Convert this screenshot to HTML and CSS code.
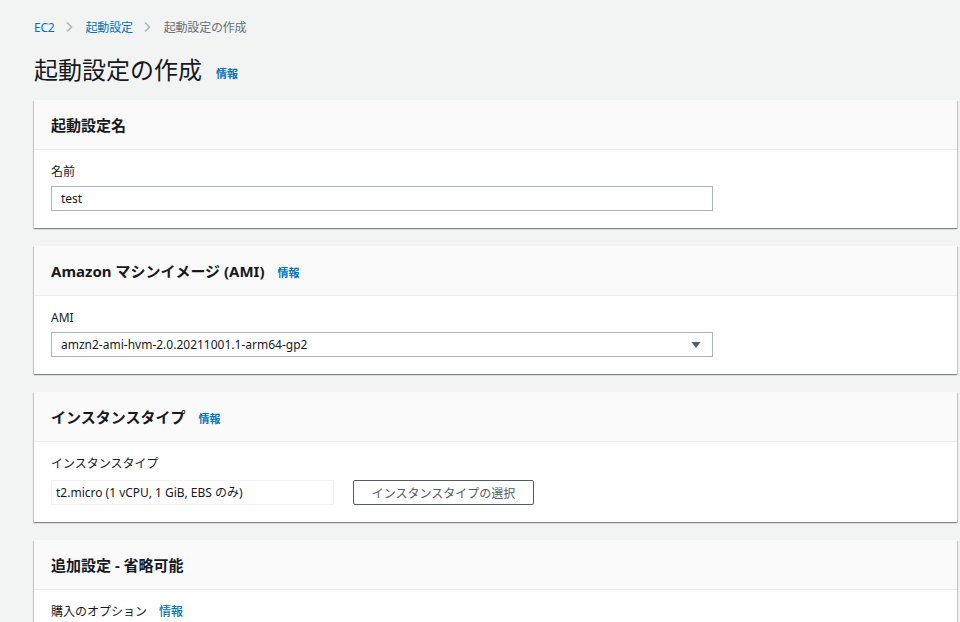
FILE: index.html
```html
<!DOCTYPE html>
<html lang="ja">
<head>
<meta charset="utf-8">
<link rel="stylesheet" href="styles.css">
</head>
<body>
<div class="page">
  <nav class="crumbs">
    <a class="crumb-link">EC2</a>
    <svg class="chev" width="10" height="12" viewBox="0 0 10 12"><path d="M3 1.5 L7.5 6 L3 10.5" fill="none" stroke="#aab7b8" stroke-width="1.6"/></svg>
    <a class="crumb-link">起動設定</a>
    <svg class="chev" width="10" height="12" viewBox="0 0 10 12"><path d="M3 1.5 L7.5 6 L3 10.5" fill="none" stroke="#aab7b8" stroke-width="1.6"/></svg>
    <span class="crumb-current">起動設定の作成</span>
  </nav>

  <div class="title-row">
    <h1 class="title">起動設定の作成</h1>
    <a class="info">情報</a>
  </div>

  <section class="card">
    <div class="card-head"><h2 class="card-title">起動設定名</h2></div>
    <div class="card-body">
      <div class="label">名前</div>
      <div class="input">test</div>
    </div>
  </section>

  <section class="card">
    <div class="card-head"><h2 class="card-title">Amazon マシンイメージ (AMI)</h2><a class="info">情報</a></div>
    <div class="card-body">
      <div class="label">AMI</div>
      <div class="input select">
        <span>amzn2-ami-hvm-2.0.20211001.1-arm64-gp2</span>
        <svg width="10" height="8" viewBox="0 0 10 8"><path d="M0.5 1 H9.5 L5 7 Z" fill="#545b64"/></svg>
      </div>
    </div>
  </section>

  <section class="card">
    <div class="card-head"><h2 class="card-title">インスタンスタイプ</h2><a class="info">情報</a></div>
    <div class="card-body">
      <div class="label label-wide">インスタンスタイプ</div>
      <div class="type-row">
        <div class="readonly">t2.micro (1 vCPU, 1 GiB, EBS のみ)</div>
        <button class="btn">インスタンスタイプの選択</button>
      </div>
    </div>
  </section>

  <section class="card">
    <div class="card-head"><h2 class="card-title">追加設定 - 省略可能</h2></div>
    <div class="card-body">
      <div class="label label-row">購入のオプション <a class="info info-label">情報</a></div>
    </div>
  </section>
</div>
</body>
</html>
```

FILE: styles.css
```css
html, body {
  margin: 0;
  padding: 0;
  background: #f2f3f3;
  font-family: "Noto Sans", "Noto Sans CJK JP", sans-serif;
  color: #16191f;
}

.page {
  padding: 0 3px 0 34px;
  height: 622px;
  overflow: hidden;
}

.crumbs {
  display: flex;
  align-items: center;
  height: 20px;
  padding-top: 17px;
  font-size: 12px;
  letter-spacing: -0.2px;
}

.crumb-link {
  color: #0073bb;
}

.chev {
  margin: 0 12px 0 9px;
}

.crumb-current {
  color: #687078;
}

.title-row {
  display: flex;
  align-items: center;
  margin-top: 13px;
  height: 40px;
}

.title {
  margin: 0;
  font-size: 24px;
  font-weight: 400;
  line-height: 40px;
  color: #16191f;
}

.info {
  color: #0073bb;
  font-size: 11px;
  font-weight: 700;
  margin-left: 14px;
  padding-top: 6px;
}

.card {
  margin-top: 10px;
  background: #fff;
  box-shadow: 0 1px 1px 0 rgba(0, 28, 36, 0.3), 1px 1px 1px 0 rgba(0, 28, 36, 0.15), -1px 1px 1px 0 rgba(0, 28, 36, 0.15);
}

.card + .card {
  margin-top: 18px;
}

.card-head {
  display: flex;
  align-items: center;
  height: 49px;
  padding: 0 17px;
  background: #fafafa;
  border-bottom: 1px solid #eaeded;
}

.card-head .info {
  margin-left: 13px;
  padding-top: 2px;
}

.card-title {
  margin: 0;
  font-size: 15px;
  font-weight: 700;
  line-height: 20px;
}

.card-body {
  padding: 14px 17px 17px;
}

.label {
  font-size: 12px;
  line-height: 16px;
  margin-bottom: 6px;
}

.label-wide {
  margin-bottom: 8px;
}

.label-row {
  display: flex;
  align-items: center;
}

.info-label {
  margin-left: 12px;
  padding-top: 0;
  font-weight: 500;
  font-size: 12px;
}

.input {
  box-sizing: border-box;
  width: 662px;
  height: 25px;
  border: 1px solid #aab7b8;
  padding: 0 9px;
  font-size: 12px;
  line-height: 23px;
  background: #fff;
}

.select {
  display: flex;
  align-items: center;
  justify-content: space-between;
  padding-right: 11px;
}

.type-row {
  display: flex;
  align-items: center;
  gap: 19px;
}

.readonly {
  box-sizing: border-box;
  width: 283px;
  height: 25px;
  border: 1px solid #f0f1f1;
  padding: 0 4px;
  font-size: 12px;
  line-height: 23px;
}

.btn {
  box-sizing: border-box;
  width: 181px;
  height: 25px;
  border: 1px solid #545b64;
  border-radius: 2px;
  background: #fff;
  color: #545b64;
  font-family: "Noto Sans", "Noto Sans CJK JP", sans-serif;
  font-size: 12px;
  padding: 0;
}
```
